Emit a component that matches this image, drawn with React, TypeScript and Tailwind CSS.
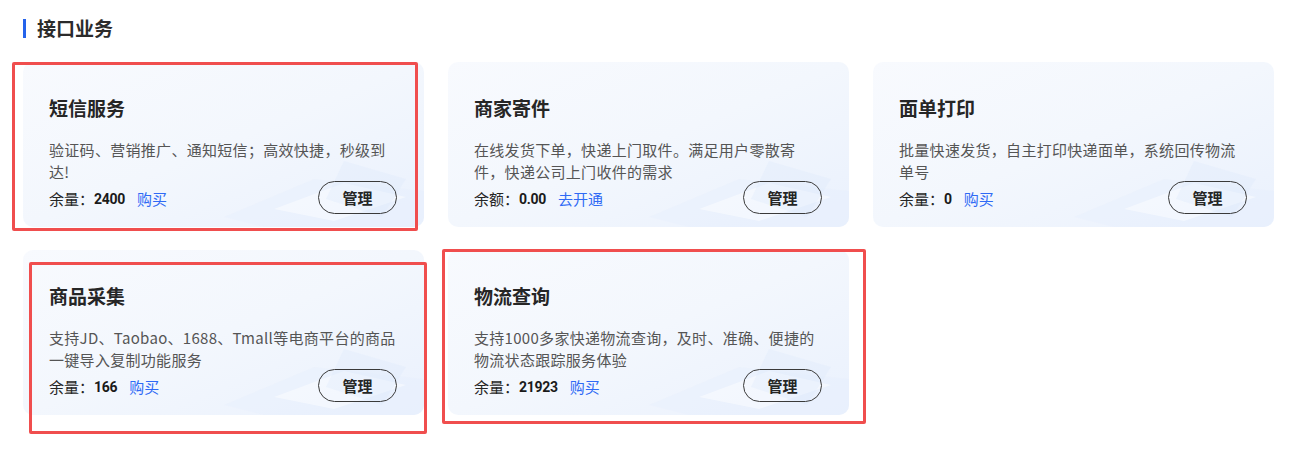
import React from 'react';

type Service = { title: string; desc: string; label: string; value: string; action: string };

const services: Service[] = [
  { title: '短信服务', desc: '验证码、营销推广、通知短信；高效快捷，秒级到达!', label: '余量', value: '2400', action: '购买' },
  { title: '商家寄件', desc: '在线发货下单，快递上门取件。满足用户零散寄件，快递公司上门收件的需求', label: '余额', value: '0.00', action: '去开通' },
  { title: '面单打印', desc: '批量快速发货，自主打印快递面单，系统回传物流单号', label: '余量', value: '0', action: '购买' },
  { title: '商品采集', desc: '支持JD、Taobao、1688、Tmall等电商平台的商品一键导入复制功能服务', label: '余量', value: '166', action: '购买' },
  { title: '物流查询', desc: '支持1000多家快递物流查询，及时、准确、便捷的物流状态跟踪服务体验', label: '余量', value: '21923', action: '购买' },
];

// faint glassy planes in the bottom-right corner of each card
function Deco() {
  return (
    <svg className="pointer-events-none absolute bottom-0 right-0" width="230" height="110" viewBox="0 0 230 110">
      <polygon points="30,100 120,62 230,74 230,110 70,110" fill="#e4eefc" opacity="0.35" />
      <polygon points="80,92 150,66 212,80 140,104" fill="#ffffff" opacity="0.45" />
      <polygon points="150,44 212,62 188,100 132,82" fill="#dce8fb" opacity="0.3" />
    </svg>
  );
}

function Card({ s }: { s: Service }) {
  return (
    <div className="relative flex h-[165px] flex-col overflow-hidden rounded-[10px] bg-gradient-to-br from-[#f8fafe] via-[#f3f7fd] to-[#eaf1fd] pl-[26px] pr-[27px] pt-[33px] pb-[12px]">
      <Deco />
      <div className="relative text-[19px] font-semibold leading-[26px] text-[#262626]">{s.title}</div>
      <div className="relative mt-[18px] h-[44px] w-[350px] text-[15px] leading-[22px] tracking-[0.3px] text-[#555555]">{s.desc}</div>
      <div className="relative mt-[-2px] flex items-center justify-between">
        <div className="flex items-center pt-[3px] text-[15px] text-[#262626]">
          <span>{s.label}：</span>
          <span className="font-['Roboto',sans-serif] text-[14px] font-bold tracking-[-0.3px] text-[#1a1a1a]">{s.value}</span>
          <span className="ml-[12px] text-[#2f6af5]">{s.action}</span>
        </div>
        <button className="h-[33px] w-[79px] rounded-full border border-[#3a3a3a] pt-[1px] text-[15px] font-bold text-[#262626]">管理</button>
      </div>
    </div>
  );
}

export default function App() {
  return (
    <div className="relative h-[465px] w-[1299px] bg-white px-[23px] pt-[17px] font-['Noto_Sans_CJK_SC','Noto_Sans',sans-serif]">
      <div className="flex items-center">
        <span className="h-[19px] w-[3px] bg-[#2563eb]" />
        <h2 className="ml-[11px] text-[19px] font-bold leading-[22px] text-[#2b2b2b]">接口业务</h2>
      </div>
      <div className="mt-[23px] grid w-[1251px] grid-cols-3 gap-x-[24px] gap-y-[23px]">
        {services.map(s => <Card key={s.title} s={s} />)}
      </div>
      <div className="pointer-events-none absolute left-[12px] top-[62px] h-[169px] w-[406px] rounded-[2px] border-[3px] border-[#f04e4e]" />
      <div className="pointer-events-none absolute left-[29px] top-[262px] h-[172px] w-[398px] rounded-[2px] border-[3px] border-[#f04e4e]" />
      <div className="pointer-events-none absolute left-[442px] top-[249px] h-[175px] w-[424px] rounded-[2px] border-[3px] border-[#f04e4e]" />
    </div>
  );
}
